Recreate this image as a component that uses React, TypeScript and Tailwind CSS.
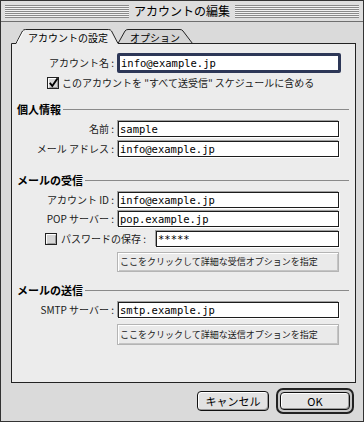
const stripes =
  "h-[13px] flex-1 bg-[repeating-linear-gradient(to_bottom,#8a8a8a_0px,#8a8a8a_1px,#f2f2f2_1px,#f2f2f2_2px)]"

function TitleBar() {
  return (
    <div className="h-[21px] flex items-center px-[4px] border-b border-[#6f6f6f] bg-[#dedede]">
      <div className={stripes} />
      <span className="px-[5px] text-[12px] leading-[14px] text-black">アカウントの編集</span>
      <div className={stripes} />
    </div>
  )
}

function Tabs() {
  return (
    <div className="relative h-[17px] w-[345px]">
      <svg className="absolute inset-0" width="345" height="17" viewBox="0 0 345 17">
        <path d="M107,16.5 L114,4 Q115,2.5 117,2.5 H169 Q171,2.5 172,4 L181.5,16.5 Z" fill="#d4d4d4" stroke="#222" />
        <path d="M107,16.5 H345" stroke="#222" />
        <path d="M0,17 V16 H5 L11.5,3 H100 L107,16 V17 Z" fill="#ececec" />
        <path d="M0.5,17 V16.5 H5 L11.5,4 Q12.5,2.5 14.5,2.5 H97.5 Q99.5,2.5 100.5,4 L107,16.5" fill="none" stroke="#222" />
        <path d="M6.5,15.5 L12.5,4.5" stroke="#fff" />
      </svg>
      <div className="relative flex text-[10px] leading-[13px] pt-[4px] text-black">
        <span className="ml-[17px] w-[90px]">アカウントの設定</span>
        <span className="ml-[12px]">オプション</span>
      </div>
    </div>
  )
}

function CheckBox({ checked }: { checked?: boolean }) {
  return (
    <svg width="12" height="12" viewBox="0 0 12 12" className="shrink-0 overflow-visible">
      <rect x="0.5" y="0.5" width="11" height="11" fill="#d6d6d6" stroke="#222" />
      <path d="M1.5,10.5 V1.5 H10.5" stroke="#fff" fill="none" />
      <path d="M2.5,10.5 H10.5 V2.5" stroke="#9a9a9a" fill="none" />
      {checked && <path d="M2.8,5.8 L5.3,9 L10.6,1.2" stroke="#000" strokeWidth="1.9" fill="none" />}
    </svg>
  )
}

function Field({ value, width = 221 }: { value: string; width?: number }) {
  return (
    <div
      className="shrink-0 h-[16px] bg-white border border-[#1c1c1c] shadow-[-1px_-1px_0_#a0a0a0,1px_1px_0_#ffffff] pl-[1px] flex items-center font-['DejaVu_Sans_Mono',monospace] text-[10.5px] leading-[14px] text-black"
      style={{ width }}
    >
      {value}
    </div>
  )
}

function Row({ label, value, className = "" }: { label: string; value: string; className?: string }) {
  return (
    <div className={`flex items-center ${className}`}>
      <span className="w-[102px] mr-[4px] text-right text-[10px] leading-[14px] text-[#1a1a1a] whitespace-nowrap">{label}</span>
      <Field value={value} />
    </div>
  )
}

function Section({ title, className = "" }: { title: string; className?: string }) {
  return (
    <div className={`flex items-center h-[14px] pl-[5px] pr-[6px] ${className}`}>
      <span className="text-[11px] leading-[14px] font-bold text-black">{title}</span>
      <div className="flex-1 ml-[2px] h-px bg-[#8a8a8a]" />
    </div>
  )
}

function BevelButton({ label, className = "" }: { label: string; className?: string }) {
  return (
    <div
      className={`ml-[105px] w-[222px] flex items-center pl-[2px] bg-[#eaeaea] border border-[#b4b4b4] shadow-[inset_1px_1px_0_#ffffff,inset_-1px_-1px_0_#c4c4c4] text-[9px] leading-[14px] text-[#1a1a1a] whitespace-nowrap ${className}`}
    >
      {label}
    </div>
  )
}

function Panel() {
  return (
    <div className="w-[345px] h-[339px] bg-[#ececec] border-l border-r border-b border-[#222] flex flex-col">
      <div className="mt-[9px] flex items-center">
        <span className="w-[102px] mr-[3px] text-right text-[10px] leading-[14px] text-[#1a1a1a]">アカウント名 :</span>
        <div className="w-[224px] h-[20px] border-[3px] border-[#2d3757] rounded-[2px] bg-white flex items-center pl-[1px] font-['DejaVu_Sans_Mono',monospace] text-[10.5px] leading-[14px] text-black">
          info@example.jp
        </div>
      </div>
      <div className="mt-[4px] h-[12px] flex items-center pl-[35px] gap-[3px]">
        <CheckBox checked />
        <span className="text-[10px] leading-[14px] text-[#1a1a1a] whitespace-nowrap">
          {'このアカウントを "すべて送受信" スケジュールに含める'}
        </span>
      </div>

      <Section title="個人情報" className="mt-[13px]" />
      <Row label="名前 :" value="sample" className="mt-[5px]" />
      <Row label="メール アドレス :" value="info@example.jp" className="mt-[4px]" />

      <Section title="メールの受信" className="mt-[16px]" />
      <Row label="アカウント ID :" value="info@example.jp" className="mt-[5px]" />
      <Row label="POP サーバー :" value="pop.example.jp" className="mt-[3px]" />
      <div className="mt-[4px] flex items-center pl-[33px]">
        <CheckBox />
        <span className="ml-[4px] w-[95px] text-[10px] leading-[14px] text-[#1a1a1a] whitespace-nowrap">パスワードの保存 :</span>
        <Field value="*****" width={183} />
      </div>
      <BevelButton label="ここをクリックして詳細な受信オプションを指定" className="mt-[5px] h-[20px]" />

      <Section title="メールの送信" className="mt-[11px]" />
      <Row label="SMTP サーバー :" value="smtp.example.jp" className="mt-[5px]" />
      <BevelButton label="ここをクリックして詳細な送信オプションを指定" className="mt-[6px] h-[21px]" />
    </div>
  )
}

function Footer() {
  return (
    <div className="mt-[5px] h-[26px] flex items-center justify-end gap-[7px] pr-[2px]">
      <button className="w-[72px] h-[20px] flex items-center justify-center rounded-[4px] border border-[#111] bg-[#e2e2e2] shadow-[inset_1px_1px_0_#ffffff,inset_-1px_-1px_0_#9a9a9a] text-[11px] leading-[14px] text-black">
        キャンセル
      </button>
      <div className="w-[78px] h-[26px] rounded-[7px] border-2 border-[#222] bg-[#c6c6c6] p-[2px]">
        <button className="w-full h-full flex items-center justify-center rounded-[4px] border border-[#111] bg-[#e4e4e4] shadow-[inset_1px_1px_0_#ffffff,inset_-1px_-1px_0_#9a9a9a] text-[11px] leading-[14px] text-black">
          OK
        </button>
      </div>
    </div>
  )
}

export default function App() {
  return (
    <div className="w-[364px] h-[422px] border border-[#333] bg-[#dadada] flex flex-col font-['Noto_Sans_CJK_JP','Noto_Sans',sans-serif]">
      <TitleBar />
      <div className="flex flex-col pl-[10px] pr-[7px] pt-[5px]">
        <Tabs />
        <Panel />
        <Footer />
      </div>
    </div>
  )
}
